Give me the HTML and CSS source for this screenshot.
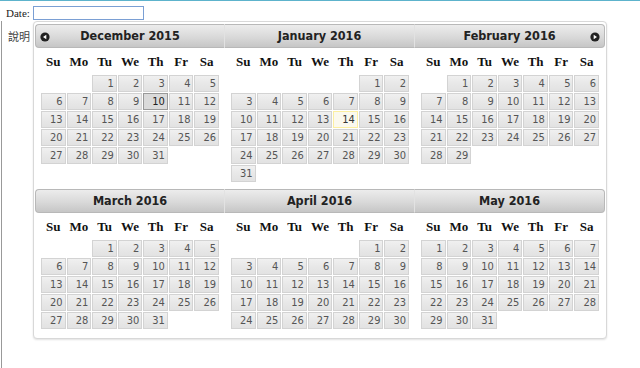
FILE: index.html
```html
<!DOCTYPE html>
<html lang="en">
<head>
    <meta charset="UTF-8">
    <title>Datepicker</title>
    <link rel="stylesheet" href="styles.css">
</head>
<body>
    <div class="page">
        <div class="field-row">
            <label for="date">Date:</label>
            <input type="text" id="date">
        </div>
        <div class="content">
            <p class="note">說明</p>
        </div>

        <div class="datepicker" id="picker"></div>
    </div>

    <script>
        const months = ['January', 'February', 'March', 'April', 'May', 'June', 'July',
            'August', 'September', 'October', 'November', 'December'];
        const dayNames = ['Su', 'Mo', 'Tu', 'We', 'Th', 'Fr', 'Sa'];
        const prevIcon = '<svg width="10" height="10" viewBox="0 0 10 10"><circle cx="5" cy="5" r="4.6" fill="#222"/><polygon points="3,5 6.3,2.8 6.3,7.2" fill="#fff"/></svg>';
        const nextIcon = '<svg width="10" height="10" viewBox="0 0 10 10"><circle cx="5" cy="5" r="4.6" fill="#222"/><polygon points="7,5 3.7,2.8 3.7,7.2" fill="#fff"/></svg>';

        function buildMonth(year, month, index) {
            const first = new Date(year, month, 1).getDay();
            const days = new Date(year, month + 1, 0).getDate();
            const pos = index % 3 === 0 ? 'first' : index % 3 === 1 ? 'middle' : 'last';

            let html = `<div class="group">
                <div class="header header-${pos}">
                    <span class="nav">${index === 0 ? prevIcon : ''}</span>
                    <span class="title">${months[month]} ${year}</span>
                    <span class="nav">${index === 2 ? nextIcon : ''}</span>
                </div>
                <table class="calendar"><thead><tr>`;
            dayNames.forEach(d => { html += `<th>${d}</th>`; });
            html += '</tr></thead><tbody><tr>';

            for (let i = 0; i < first; i++) html += '<td></td>';
            for (let d = 1; d <= days; d++) {
                const col = (first + d - 1) % 7;
                let cls = 'day';
                if (year === 2016 && month === 0 && d === 14) cls += ' today';
                if (year === 2015 && month === 11 && d === 10) cls += ' hover';
                html += `<td><span class="${cls}">${d}</span></td>`;
                if (col === 6 && d < days) html += '</tr><tr>';
            }
            html += '</tr></tbody></table></div>';
            return html;
        }

        let out = '';
        for (let i = 0; i < 6; i++) {
            const m = (11 + i) % 12;
            const y = i === 0 ? 2015 : 2016;
            out += buildMonth(y, m, i);
        }
        document.getElementById('picker').innerHTML = out;
    </script>
</body>
</html>
```

FILE: styles.css
```css
* {
    box-sizing: border-box;
}

body {
    margin: 0;
    font-family: "Liberation Serif", serif;
    font-size: 11px;
    color: #222;
}

.page {
    position: relative;
    border-top: 1px solid #5db3cc;
    min-height: 367px;
}

.field-row {
    display: flex;
    align-items: center;
    gap: 3px;
    padding: 5px 0 0 6px;
    height: 19px;
}

.field-row input {
    width: 111px;
    height: 14px;
    padding: 0 2px;
    border: 1px solid #7a9fd4;
    font-size: 11px;
}

.content {
    margin-left: 1px;
    margin-top: 1px;
    border-left: 1px solid #999;
    min-height: 347px;
    padding: 8px 0 0 6px;
}

.note {
    margin: 0;
    font-family: "Noto Sans CJK TC", sans-serif;
    font-size: 11px;
    line-height: 14px;
    color: #444;
}

/* popup calendar */
.datepicker {
    position: absolute;
    left: 33px;
    top: 20px;
    width: 574px;
    padding: 2px 1px 2px;
    display: grid;
    grid-template-columns: repeat(3, 190px);
    background: #fff;
    border: 1px solid #d8d8d8;
    border-radius: 4px;
    box-shadow: 0 1px 2px rgba(0,0,0,0.12);
}

.header {
    display: grid;
    grid-template-columns: 18px 1fr 18px;
    align-items: center;
    height: 24px;
    border: 1px solid #b8b8b8;
    background: linear-gradient(#ececec, #d9d9d9 55%, #c6c6c6);
    color: #222;
}

.header-first {
    border-radius: 4px 0 0 4px;
    border-right-color: #e2e2e2;
}

.header-middle {
    border-left: 0;
    border-right-color: #e2e2e2;
}

.header-last {
    border-left: 0;
    border-radius: 0 4px 4px 0;
}

.nav {
    display: flex;
    justify-content: center;
    padding-top: 1px;
}

.title {
    text-align: center;
    font-family: "DejaVu Sans Condensed", "DejaVu Sans", sans-serif;
    font-stretch: condensed;
    font-weight: bold;
    font-size: 12.5px;
    line-height: 22px;
}

.calendar {
    width: 180px;
    margin: 0 auto 6px;
    border-collapse: separate;
    border-spacing: 1px;
}

.calendar th {
    padding: 6px 0;
    font-family: "Liberation Serif", serif;
    font-size: 13px;
    line-height: 13px;
    font-weight: bold;
    color: #111;
    text-align: center;
}

.calendar td {
    padding: 0;
}

.day {
    display: block;
    border: 1px solid #d3d3d3;
    background: linear-gradient(#f0f0f0, #e8e8e8 50%, #e2e2e2);
    padding: 1px 2px;
    line-height: 13px;
    text-align: right;
    font-family: "DejaVu Sans Condensed", "DejaVu Sans", sans-serif;
    font-stretch: condensed;
    font-size: 11px;
    color: #555;
}

.day.hover {
    border-color: #999;
    background: #dadada;
    color: #212121;
}

.day.today {
    border-color: #fcefa1;
    background: #fbf9ee;
    color: #363636;
}
```
